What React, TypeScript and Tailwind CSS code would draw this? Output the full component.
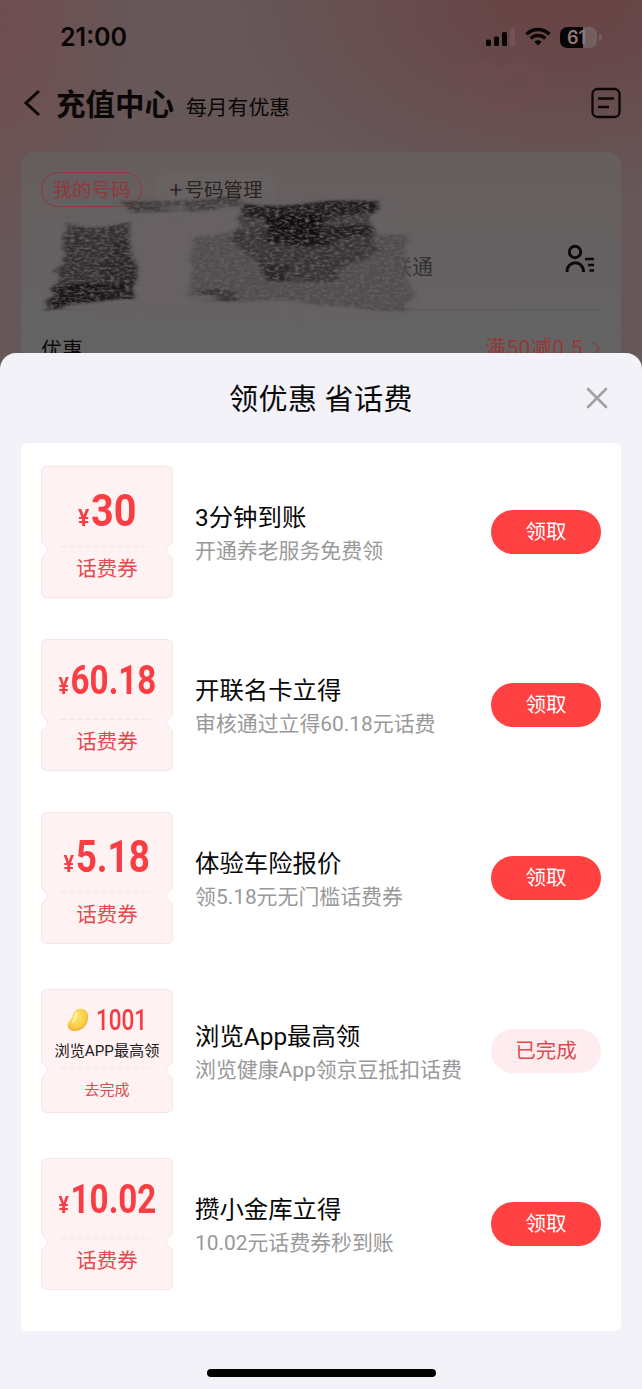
import { X } from 'lucide-react';

interface Offer {
  title: string;
  desc: string;
  amount: string;
  amountClass: string;
  done?: boolean;
}

const offers: Offer[] = [
  {
    title: '3分钟到账',
    desc: '开通养老服务免费领',
    amount: '30',
    amountClass: 'text-[45px] leading-[62px] scale-x-[0.88]',
  },
  {
    title: '开联名卡立得',
    desc: '审核通过立得60.18元话费',
    amount: '60.18',
    amountClass: 'text-[41px] leading-[54px] scale-x-[0.81]',
  },
  {
    title: '体验车险报价',
    desc: '领5.18元无门槛话费券',
    amount: '5.18',
    amountClass: 'text-[45px] leading-[62px] scale-x-[0.82]',
  },
  {
    title: '浏览App最高领',
    desc: '浏览健康App领京豆抵扣话费',
    amount: '1001',
    amountClass: 'text-[30px] scale-x-[0.75]',
    done: true,
  },
  {
    title: '攒小金库立得',
    desc: '10.02元话费券秒到账',
    amount: '10.02',
    amountClass: 'text-[41px] leading-[54px] scale-x-[0.81]',
  },
];

function StatusIcons() {
  return (
    <div className="flex items-center">
      <svg width="30" height="20" viewBox="0 0 30 20" fill="#080505">
        <rect x="0" y="12.500" width="5" height="6.500" rx="1.500" />
        <rect x="8" y="9.500" width="5" height="9.500" rx="1.500" />
        <rect x="16" y="5" width="5" height="14" rx="1.500" />
        <rect x="24" y="1" width="5" height="18" rx="1.500" fill="#755154" />
      </svg>
      <svg className="ml-[9px]" width="26" height="20" viewBox="0 0 26 20" fill="none" stroke="#080505" strokeWidth="3.400">
        <path d="M1.500 7.200C8 .9 18 .9 24.500 7.200" />
        <path d="M5.700 11.400C9.900 7.500 16.100 7.500 20.300 11.400" />
        <path d="M9.300 14.700C11.500 12.700 14.500 12.700 16.700 14.700L13 18.400Z" fill="#080505" stroke="none" />
      </svg>
      <div className="relative ml-[9px] h-[21px] w-[37px] overflow-hidden rounded-[7px] bg-[#745f60]">
        <div className="h-full w-[23px] bg-[#080505]" />
        <span className="absolute inset-0 pr-1 text-center font-['Inter'] text-[18px] font-semibold leading-[21px] text-[#94797b]">
          61
        </span>
      </div>
      <div className="ml-0.5 h-[7px] w-[3px] rounded-r-full bg-[#745f60]" />
    </div>
  );
}

function Scribble() {
  return (
    <svg className="absolute left-0 top-0" width="642" height="354" viewBox="0 0 642 354">
      <defs>
        <filter id="grain" x="-5%" y="-10%" width="110%" height="120%" colorInterpolationFilters="sRGB">
          <feTurbulence type="fractalNoise" baseFrequency="0.2 0.4" numOctaves="3" seed="4" result="noise" />
          <feColorMatrix in="noise" type="matrix" values="0 0 0 0 0  0 0 0 0 0  0 0 0 0 0  0 0 0 2.200 -0.300" result="mask" />
          <feTurbulence type="fractalNoise" baseFrequency="0.015 0.12" numOctaves="1" seed="9" result="edge" />
          <feDisplacementMap in="SourceGraphic" in2="edge" scale="18" xChannelSelector="R" yChannelSelector="R" result="rough" />
          <feGaussianBlur in="rough" stdDeviation="2 1" result="soft" />
          <feComposite in="soft" in2="mask" operator="in" />
        </filter>
        <filter id="smudge" x="-5%" y="-10%" width="110%" height="120%" colorInterpolationFilters="sRGB">
          <feGaussianBlur stdDeviation="4" />
        </filter>
      </defs>
      <path
        d="M47 229L125 209L380 203L386 235L406 240L408 310L300 319L220 312L120 316L50 302Z"
        fill="#676163"
        filter="url(#smudge)"
      />
      <g filter="url(#grain)">
        <path d="M66 224L130 222L127 255L137 262L136 285L52 292L62 262Z" fill="#171414" fillOpacity="0.620" />
        <path d="M106 240L128 238L136 262L134 282L104 280Z" fill="#171414" fillOpacity="0.350" />
        <path d="M58 286L133 282L132 299L78 305L43 309Z" fill="#151212" fillOpacity="0.900" />
        <path d="M122 203L245 198L240 207L130 211Z" fill="#252020" fillOpacity="0.550" />
        <path d="M243 204L380 200L370 215L378 237L372 262L345 268L330 282L270 280L258 262L232 243Z" fill="#151212" fillOpacity="0.480" />
        <path d="M246 205L380 202L372 210L322 218L318 226L374 229L372 238L318 242L262 240L270 220L242 216Z" fill="#0d0b0b" fillOpacity="0.650" />
        <path d="M270 218L322 218L316 243L266 243Z" fill="#0d0b0b" fillOpacity="0.900" />
        <path d="M258 261L288 263L284 280L266 280Z" fill="#151212" fillOpacity="0.500" />
        <path d="M192 236L280 228L375 237L408 236L405 265L412 290L407 312L300 302L190 299Z" fill="#292324" fillOpacity="0.320" />
        <path d="M196 290L216 288L238 293L236 299L202 299Z" fill="#1a1717" fillOpacity="0.500" />
      </g>
    </svg>
  );
}

function RechargePage() {
  return (
    <div className="relative h-[354px] bg-[#665859] bg-[radial-gradient(ellipse_150px_260px_at_0_20px,#704d4f,transparent),radial-gradient(ellipse_340px_210px_at_560px_0,#684648_20%,transparent)]">
      <div className="flex items-center justify-between pl-[60px] pr-[40px] pt-5">
        <span className="font-['Inter'] text-[25px] font-semibold leading-[34px] text-[#080505]">21:00</span>
        <StatusIcons />
      </div>
      <svg className="absolute left-[415px] top-[60px]" width="180" height="90" viewBox="0 0 180 90" fill="none" stroke="#7a4d51" opacity="0.250">
        <path d="M86 50L58 32C35 15 69-5 86 18C107-5 139 15 113 36Z" strokeWidth="12" />
        <path d="M10 77C12 45 48 45 51 76M61 77C65 53 87 54 88 77M99 77C106 54 125 57 126 77M137 77C145 57 160 60 162 77" strokeWidth="3" />
      </svg>
      <div className="flex h-[98px] items-center pl-[23px] pr-[21px]">
        <svg width="18" height="28" viewBox="0 0 18 28" fill="none" stroke="#0b0707" strokeWidth="3">
          <path d="M16 2L3 14L16 26" />
        </svg>
        <h1 className="ml-[15px] text-[29.500px] font-bold leading-none text-[#0b0707]">充值中心</h1>
        <span className="ml-[12px] mt-1.5 text-[20.800px] leading-none text-[#0b0707]">每月有优惠</span>
        <svg className="ml-auto" width="30" height="32" viewBox="0 0 30 32" fill="none" stroke="#0b0707" strokeWidth="2.300">
          <rect x="1.500" y="2" width="27" height="28" rx="5" />
          <path d="M7 11.500H23M7 20H18" />
        </svg>
      </div>
      <div className="mx-[21px] h-[202px] rounded-t-[14px] bg-linear-to-b from-[#675e5e] to-[#646465] px-5 pt-5">
        <div className="flex items-center text-[19.500px]">
          <span className="flex h-[35px] w-[101px] items-center justify-center rounded-full border-[1.500px] border-[#90383b] pb-0.5 text-[#90383b]">
            我的号码
          </span>
          <span className="ml-3 flex h-[35px] w-[124px] items-center justify-center rounded-full bg-[#686161] pb-0.5 text-[#292424]">
            <span className="mr-0.5 text-[23px] leading-none">+</span>号码管理
          </span>
        </div>
        <div className="flex h-[103px] items-center justify-between border-b border-[#5b5858] pr-1.5">
          <span className="ml-[350px] mt-4 text-[21px] text-[#343131]">联通</span>
          <svg className="mt-0.5" width="30" height="30" viewBox="0 0 30 30" fill="none" stroke="#0b0909" strokeWidth="3">
            <circle cx="10" cy="8" r="5.700" />
            <path d="M2 28C2 15.500 18.500 15.500 18.500 28" />
            <path d="M20 15H29M23 21H29M24.500 26.500H29" strokeWidth="2.300" />
          </svg>
        </div>
        <div className="flex items-center justify-between pt-[22px] text-[21px] leading-[32px]">
          <span className="text-[#0b0909]">优惠</span>
          <span className="flex items-center font-['Roboto','Noto_Sans_CJK_SC',sans-serif] tracking-[0.5px] text-[#963735]">
            满50减0.5
            <svg className="ml-[9px]" width="9" height="15" viewBox="0 0 9 15" fill="none" stroke="#824342" strokeWidth="1.500">
              <path d="M1 1.500L7.500 7.500L1 13.500" />
            </svg>
          </span>
        </div>
      </div>
      <Scribble />
    </div>
  );
}

function BeanIcon() {
  return (
    <svg width="22" height="25" viewBox="0 0 22 25">
      <defs>
        <radialGradient id="bean" cx="0.4" cy="0.35" r="0.7">
          <stop offset="0" stopColor="#ffe56e" />
          <stop offset="0.650" stopColor="#fbcf4b" />
          <stop offset="1" stopColor="#e9aa38" />
        </radialGradient>
      </defs>
      <path d="M8 4C12 0 20 1 21 8C22 16 17 24 8 24C0 24-1 17 3 13C6 10 5 7 8 4Z" fill="url(#bean)" />
      <path d="M10 6C8 9 9 11 6 15" fill="none" stroke="#fff4b2" strokeWidth="2" strokeLinecap="round" />
    </svg>
  );
}

function Coupon({ offer }: { offer: Offer }) {
  const h = offer.done ? 124 : 132;
  const cut = offer.done ? 81 : 84;
  const outline = `M6.500 .5H125.500Q131.500 .5 131.500 6.500V${cut - 8}L126.500 ${cut - 3}Q124 ${cut} 126.500 ${cut + 3}L131.500 ${cut + 8}V${h - 6.5}Q131.500 ${h - 0.5} 125.500 ${h - 0.5}H6.500Q.5 ${h - 0.5} .5 ${h - 6.5}V${cut + 8}L5.500 ${cut + 3}Q8 ${cut} 5.500 ${cut - 3}L.5 ${cut - 8}V6.500Q.5 .5 6.500 .5Z`;
  const dashY = offer.done ? 79.5 : 80.5;

  return (
    <div className="relative w-[132px] shrink-0" style={{ height: h }}>
      <svg className="absolute inset-0" width="132" height={h} viewBox={`0 0 132 ${h}`}>
        <path d={outline} fill="#fff2f3" stroke="#f8e3e5" />
        <path d={`M20 ${dashY}H110`} stroke="#f5e0e2" strokeDasharray="4 4" />
      </svg>
      {offer.done ? (
        <div className="relative flex h-full flex-col items-center">
          <div className="mt-[17px] flex h-[27px] w-full items-center pl-[26px]">
            <BeanIcon />
            <span className={`ml-[7px] origin-left font-['Roboto'] font-medium leading-none text-[#f33d42] ${offer.amountClass}`}>
              {offer.amount}
            </span>
          </div>
          <span className="mt-[8px] whitespace-nowrap font-['Roboto','Noto_Sans_CJK_SC',sans-serif] text-[15.200px] leading-5 text-[#201819]">
            浏览APP最高领
          </span>
          <span className="mt-[18px] text-[15px] leading-5 text-[#dc4a50]">去完成</span>
        </div>
      ) : (
        <div className="relative flex h-full flex-col items-center">
          <div className="flex h-[77px] items-end justify-center">
            <div className={`flex h-[63px] origin-center items-baseline whitespace-nowrap font-['Roboto'] font-bold text-[#f83e42] ${offer.amountClass}`}>
              <span className="mr-0.5 text-[24px]">¥</span>
              {offer.amount}
            </div>
          </div>
          <span className="mt-[9px] text-[20.500px] leading-[30px] text-[#e34a4f]">话费券</span>
        </div>
      )}
    </div>
  );
}

function OfferRow({ offer }: { offer: Offer }) {
  return (
    <li className="flex h-[132px] items-center">
      <Coupon offer={offer} />
      <div className="ml-[22px] flex-1 whitespace-nowrap pt-0.5 font-['Roboto','Noto_Sans_CJK_SC',sans-serif]">
        <div className="text-[24.400px] leading-[36px] text-[#080808]">{offer.title}</div>
        <div className="text-[20.900px] leading-[31px] text-[#999]">{offer.desc}</div>
      </div>
      {offer.done ? (
        <button className="h-11 w-[110px] rounded-full bg-[#ffecee] pb-1 text-[20.500px] text-[#dc4b50]">已完成</button>
      ) : (
        <button className="h-11 w-[110px] rounded-full bg-[#ff4142] pb-1 text-[20.500px] text-white">领取</button>
      )}
    </li>
  );
}

export default function App() {
  return (
    <div className="h-[1389px] w-[642px] overflow-hidden bg-[#665a5b] font-['Noto_Sans_CJK_SC','Liberation_Sans',sans-serif]">
      <RechargePage />
      <section className="relative -mt-px h-[1036px] rounded-t-[16px] bg-[#f2f2f8] px-[21px]">
        <header className="flex h-[90px] items-center justify-center">
          <h2 className="pb-0.5 text-[29px] leading-none tracking-[0.5px] text-[#080808]">领优惠 省话费</h2>
          <button className="absolute right-[27px] top-[27px]">
            <X size={36} strokeWidth={1.8} color="#a1a1a6" />
          </button>
        </header>
        <ul className="flex h-[888px] flex-col gap-[41px] rounded-md bg-white px-5 pt-[23px]">
          {offers.map((offer) => (
            <OfferRow key={offer.title} offer={offer} />
          ))}
        </ul>
        <div className="mx-auto mt-[38px] h-[8px] w-[229px] rounded-full bg-black" />
      </section>
    </div>
  );
}
